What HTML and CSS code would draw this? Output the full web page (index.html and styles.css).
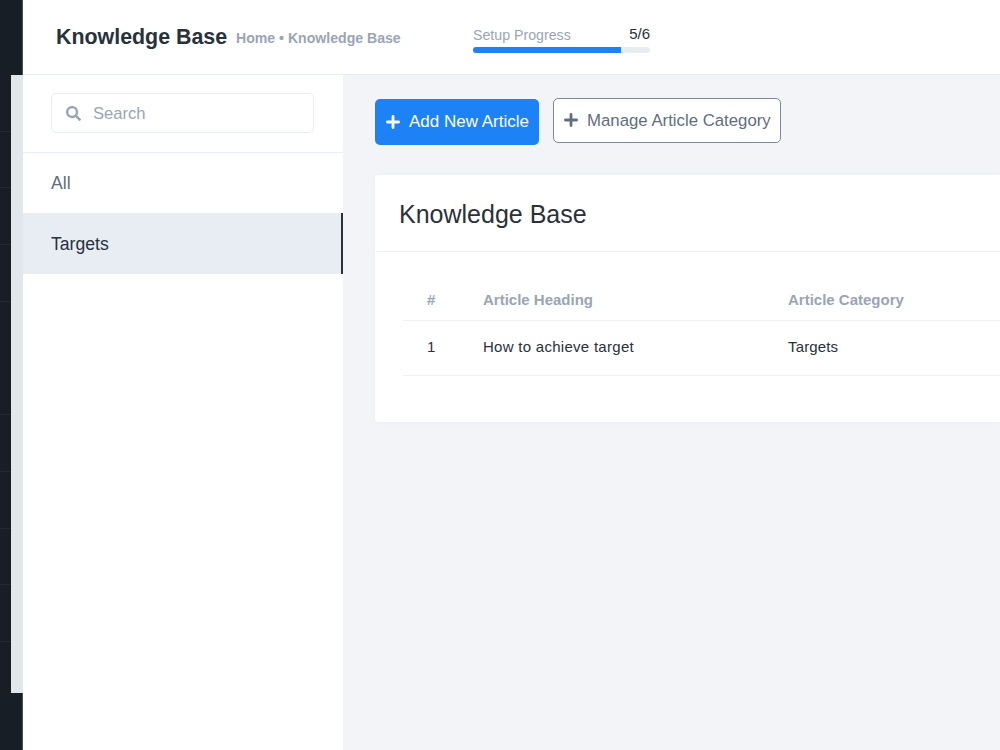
FILE: index.html
```html
<!DOCTYPE html>
<html lang="en">
<head>
  <meta charset="UTF-8">
  <meta name="viewport" content="width=device-width, initial-scale=1">
  <title>Knowledge Base</title>
  <link rel="stylesheet" href="styles.css">
</head>
<body>

  <aside class="main-sidebar">
    <div class="sidebar-menu"></div>
  </aside>

  <div class="wrapper">
    <header class="main-header">
      <h1>Knowledge Base</h1>
      <nav class="breadcrumb">Home • Knowledge Base</nav>
      <div class="setup-progress">
        <div class="progress-text">
          <span class="progress-label">Setup Progress</span>
          <span class="progress-count">5/6</span>
        </div>
        <div class="progress"><div class="progress-bar"></div></div>
      </div>
    </header>

    <div class="content">
      <div class="category-menu">
        <div class="search-box">
          <label class="search-field">
            <svg class="search-icon" viewBox="0 0 512 512"><path fill="currentColor" d="M505 442.700L405.300 343c-4.500-4.500-10.600-7-17-7H372c27.600-35.300 44-79.700 44-128C416 93.100 322.900 0 208 0S0 93.100 0 208s93.100 208 208 208c48.300 0 92.700-16.400 128-44v16.300c0 6.400 2.500 12.500 7 17l99.700 99.700c9.400 9.400 24.600 9.400 33.900 0l28.300-28.300c9.400-9.400 9.400-24.600.1-34zM208 336c-70.700 0-128-57.200-128-128 0-70.700 57.200-128 128-128 70.700 0 128 57.200 128 128 0 70.700-57.200 128-128 128z"/></svg>
            <input type="text" placeholder="Search">
          </label>
        </div>
        <a class="category">All</a>
        <a class="category active">Targets</a>
      </div>

      <main class="articles">
        <div class="actions">
          <button class="btn btn-primary">
            <svg class="plus" viewBox="0 0 14 14"><path d="M7 1.400v11.200M1.400 7h11.200"/></svg>
            <span>Add New Article</span>
          </button>
          <button class="btn btn-secondary">
            <svg class="plus" viewBox="0 0 14 14"><path d="M7 1.400v11.200M1.400 7h11.200"/></svg>
            <span>Manage Article Category</span>
          </button>
        </div>

        <section class="card">
          <h2>Knowledge Base</h2>
          <div class="card-body">
            <table>
              <thead>
                <tr><th class="col-id">#</th><th class="col-heading">Article Heading</th><th>Article Category</th></tr>
              </thead>
              <tbody>
                <tr><td>1</td><td class="article-name">How to achieve target</td><td class="article-category">Targets</td></tr>
              </tbody>
            </table>
          </div>
        </section>
      </main>
    </div>
  </div>

</body>
</html>
```
FILE: styles.css
```css
* { margin: 0; padding: 0; box-sizing: border-box; }
body {
  font-family: "Liberation Sans", Arial, sans-serif;
  display: flex;
  height: 100vh;
  overflow: hidden;
  background: #f2f4f8;
  color: #28313c;
}

/* Dark sidebar */
.main-sidebar {
  width: 23px;
  flex-shrink: 0;
  padding-top: 75px;
  background: linear-gradient(to right, #171e26 22px, #4b525b 22px);
}
.sidebar-menu {
  height: 618px;
  border-right: 12px solid #e2e7ec;
  background: repeating-linear-gradient(to bottom, #171e26 0, #171e26 55.7px, #232a31 55.7px, #232a31 56.7px);
}

.wrapper {
  flex: 1;
  min-width: 0;
  display: flex;
  flex-direction: column;
}
.main-header {
  height: 75px;
  flex-shrink: 0;
  display: flex;
  align-items: center;
  padding-left: 33px;
  background: #fff;
  border-bottom: 1px solid #e9ecf2;
}
.main-header h1 {
  width: 180px;
  font-size: 21.4px;
  white-space: nowrap;
}
.breadcrumb {
  width: 237px;
  padding-top: 1px;
  font-size: 14.1px;
  font-weight: bold;
  color: #99a5b5;
  white-space: nowrap;
}
.setup-progress {
  width: 177px;
  padding-top: 3px;
}
.progress-text {
  display: flex;
  justify-content: space-between;
  height: 22px;
  line-height: 20px;
  font-size: 14.2px;
}
.progress-label { color: #99a5b5; }
.progress-count { font-size: 15px; line-height: 18px; }
.progress {
  height: 6px;
  border-radius: 3px;
  background: #e9ecef;
  overflow: hidden;
}
.progress-bar {
  width: 83.5%;
  height: 100%;
  background: #1d82f5;
}

.content {
  flex: 1;
  display: flex;
}

/* Category list */
.category-menu {
  width: 320px;
  flex-shrink: 0;
  background: #fff;
}
.search-box {
  height: 78px;
  padding: 18px 28px;
  border-bottom: 1px solid #e8eef3;
}
.search-field {
  display: flex;
  align-items: center;
  width: 263px;
  height: 40px;
  padding-left: 14px;
  border: 1px solid #e8eef3;
  border-radius: 5px;
}
.search-icon {
  width: 15px;
  height: 15px;
  flex-shrink: 0;
  margin-right: 12px;
  color: #99a5b5;
}
.search-field input {
  width: 200px;
  padding-top: 2px;
  border: 0;
  outline: 0;
  font: 16.6px "Liberation Sans", Arial, sans-serif;
}
.search-field input::placeholder { color: #99a5b5; }
.category {
  display: block;
  height: 60px;
  padding-left: 28px;
  line-height: 60px;
  font-size: 17.6px;
  color: #616e80;
}
.category.active {
  height: 61px;
  line-height: 62px;
  background: #e8edf4;
  color: #28313c;
  border-right: 2px solid #28313c;
}

/* Articles */
.articles {
  flex: 1;
  min-width: 0;
  padding: 23px 0 0 32px;
}
.actions {
  display: flex;
  align-items: flex-start;
  gap: 14px;
  height: 77px;
}
.btn {
  display: flex;
  align-items: center;
  border-radius: 5px;
  font: 17px "Liberation Sans", Arial, sans-serif;
  white-space: nowrap;
}
.btn-primary {
  width: 164px;
  height: 46px;
  margin-top: 1px;
  padding-left: 11px;
  border: 0;
  background: #1d82f5;
  color: #fff;
}
.btn-secondary {
  width: 228px;
  height: 45px;
  padding-left: 10px;
  border: 1px solid #7d8998;
  background: #fff;
  color: #616e80;
  font-size: 16.8px;
}
.btn-secondary .plus { margin-bottom: 1px; }
.plus {
  width: 14px;
  height: 14px;
  flex-shrink: 0;
  margin-right: 9px;
  stroke: currentColor;
  stroke-width: 2.8;
  stroke-linecap: round;
}
.card {
  height: 247px;
  background: #fff;
  border-radius: 4px 0 0 4px;
  box-shadow: 0 0 4px #e8edf1;
}
.card h2 {
  height: 77px;
  padding-left: 24px;
  line-height: 78px;
  font-size: 25px;
  font-weight: normal;
  border-bottom: 1px solid #edf0f5;
}
.card-body { padding: 28px 0 0 28px; }
table {
  width: 100%;
  table-layout: fixed;
  border-collapse: collapse;
  font-size: 15px;
}
th, td {
  padding-left: 24px;
  text-align: left;
  border-bottom: 1px solid #eff1f4;
}
th {
  height: 40px;
  color: #99a5b5;
}
td {
  height: 55px;
  padding-bottom: 2px;
}
.col-id { width: 56px; }
.col-heading { width: 305px; }
.article-name { letter-spacing: 0.28px; }
.article-category { letter-spacing: 0.15px; }
```
